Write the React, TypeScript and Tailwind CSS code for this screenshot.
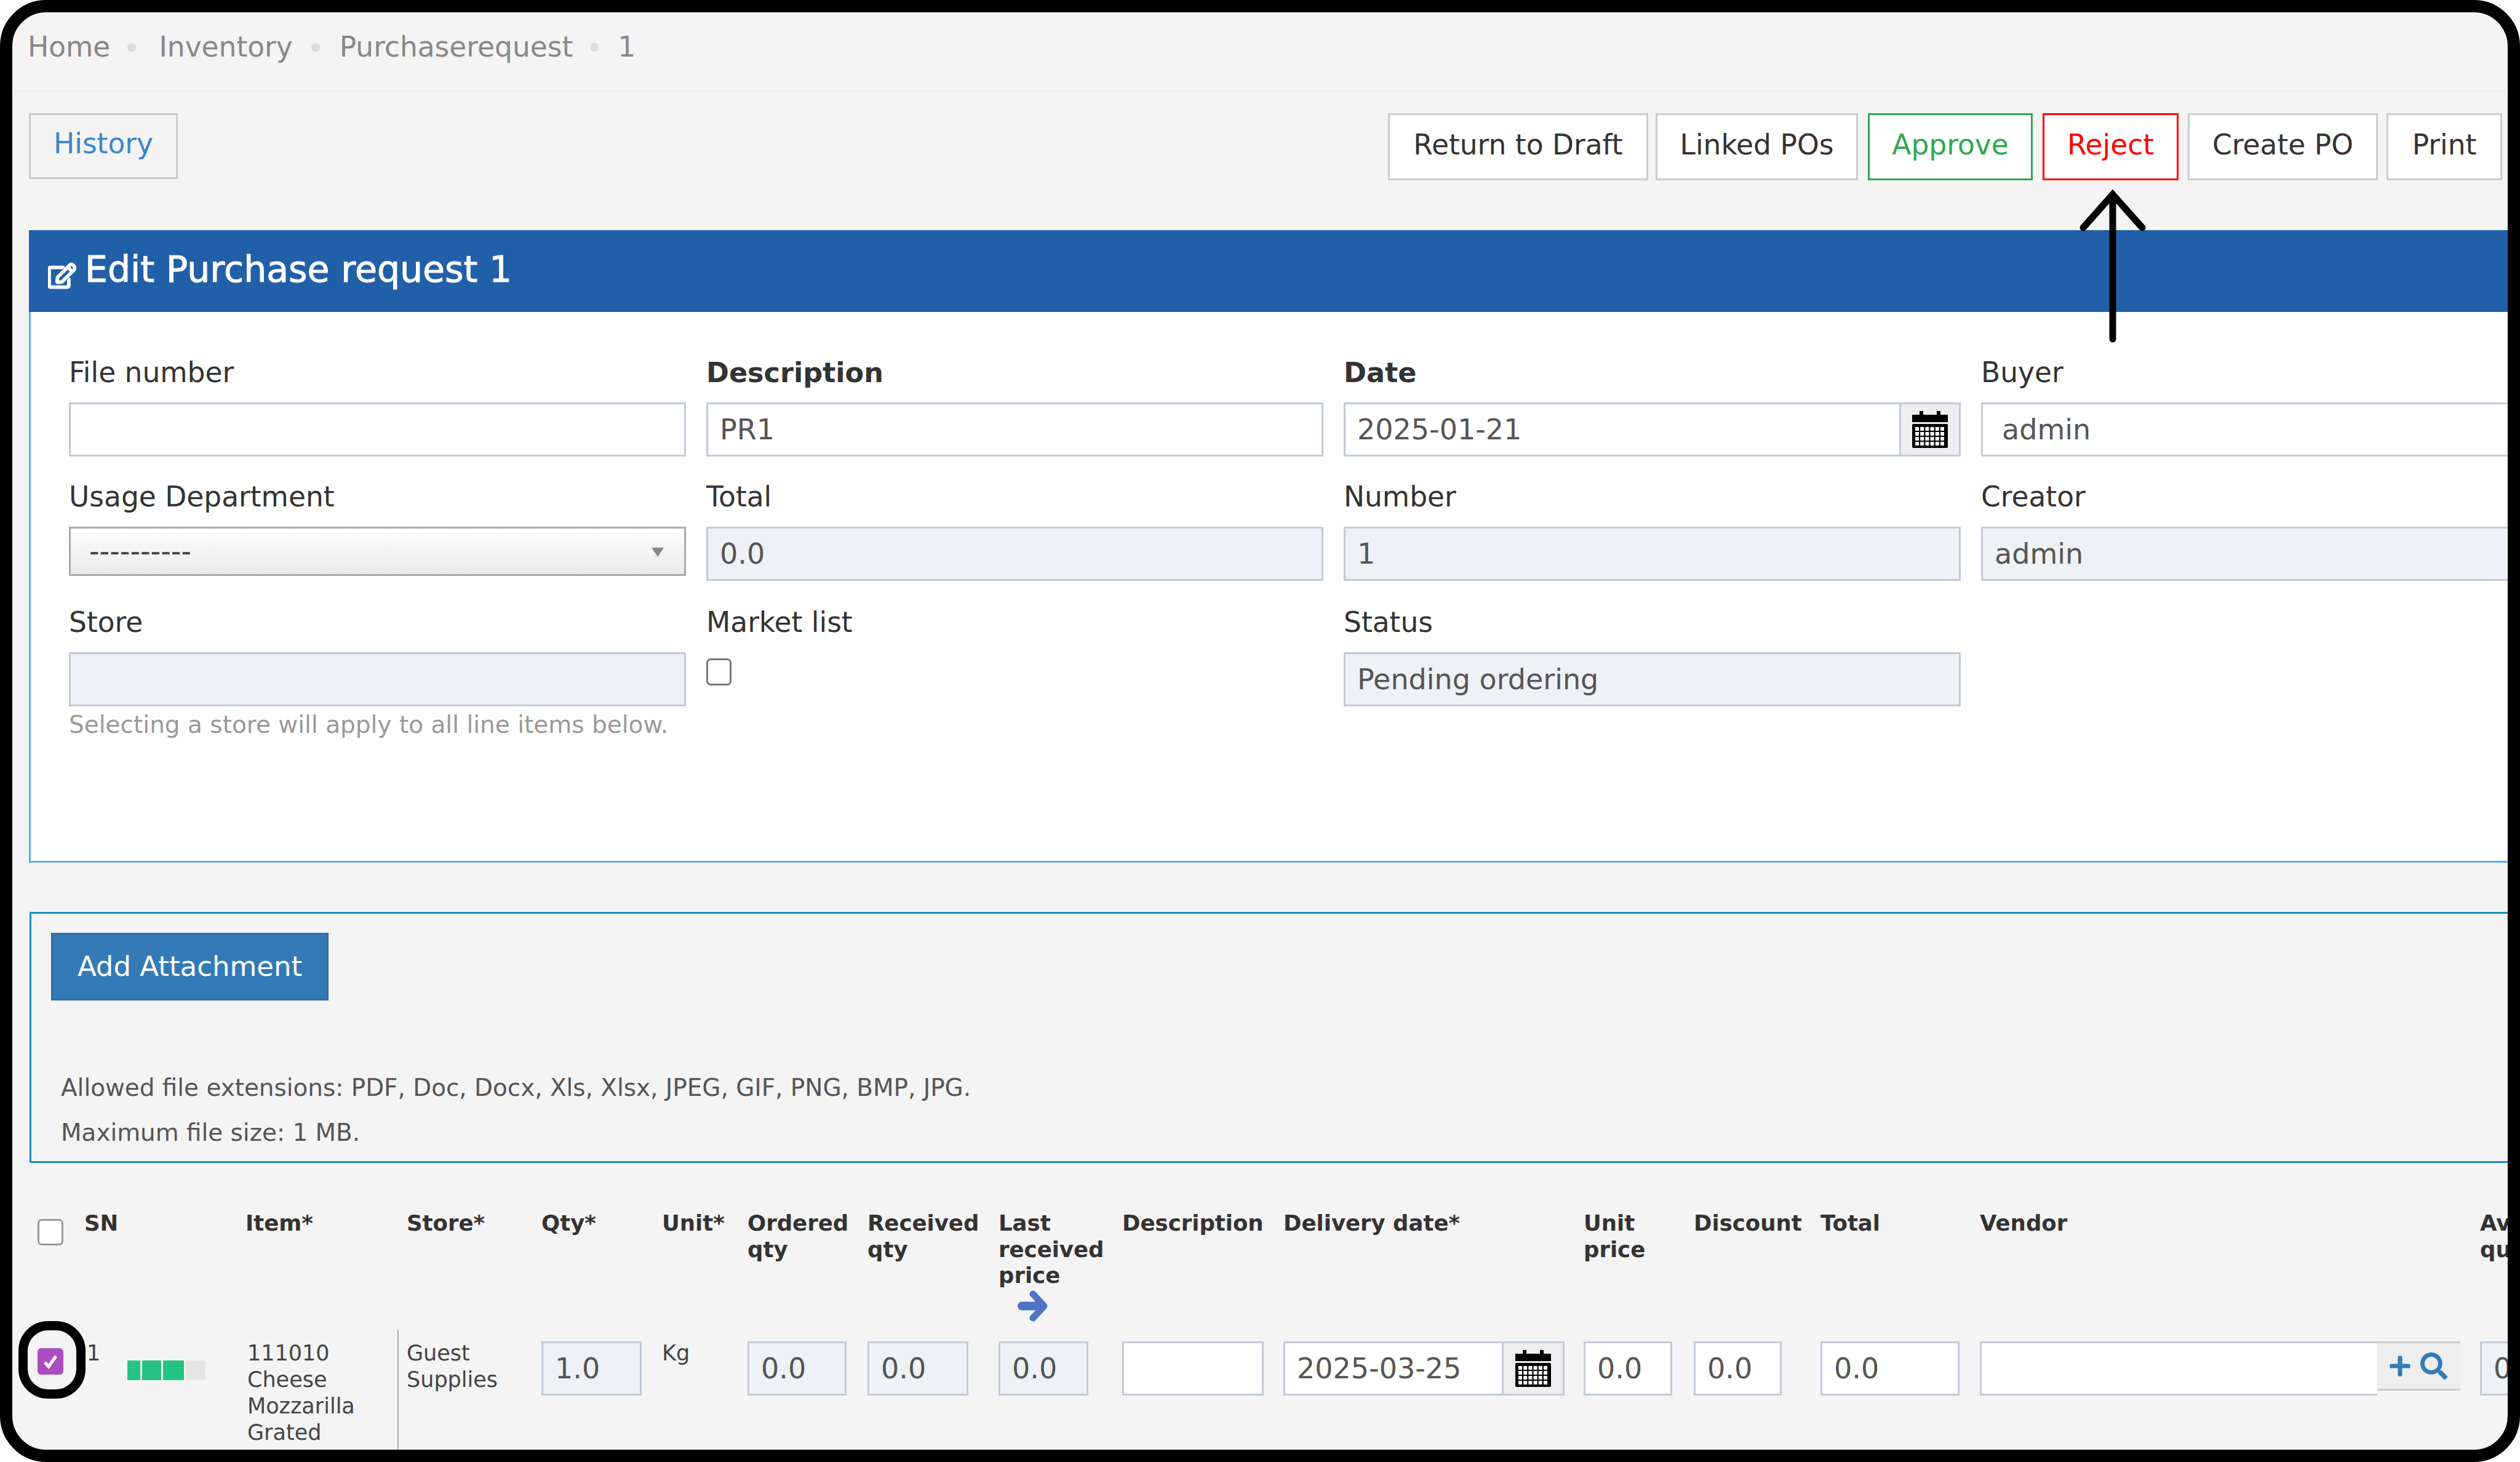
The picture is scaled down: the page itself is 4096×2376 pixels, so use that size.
import React from "react";
import { FaPlus, FaRegEdit, FaSearch } from "react-icons/fa";

function Cal() {
  const cells: React.ReactNode[] = [];
  for (let r = 0; r < 4; r++) {
    for (let c = 0; c < 6; c++) {
      cells.push(<rect key={`${r}-${c}`} x={5 + c * 8.2} y={26 + r * 8} width={6} height={6} fill="#fff" />);
    }
  }
  return (
    <svg width="58" height="60" viewBox="0 0 58 60">
      <rect x="12" y="0" width="6" height="10" fill="#000" />
      <rect x="40" y="0" width="6" height="10" fill="#000" />
      <rect x="0" y="6" width="58" height="12" fill="#000" />
      <rect x="0" y="21" width="58" height="39" rx="2" fill="#000" />
      {cells}
    </svg>
  );
}

function Field({ text = "", disabled = false, className = "" }: { text?: string; disabled?: boolean; className?: string }) {
  return (
    <div
      className={`flex h-[88px] items-center overflow-hidden border-[3px] border-[#c2cad8] px-[19px] text-[46px] text-[#555] whitespace-nowrap ${
        disabled ? "bg-[#eef1f5]" : "bg-white"
      } ${className}`}
    >
      {text}
    </div>
  );
}

function Labeled({ label, bold = false, children }: { label: string; bold?: boolean; children: React.ReactNode }) {
  return (
    <div>
      <div className={`mb-[25px] h-[50px] pt-[2px] leading-[50px] text-[#333] ${bold ? "text-[44.5px] font-bold" : "text-[45.5px]"}`}>{label}</div>
      {children}
    </div>
  );
}

function ToolButton({ label, className }: { label: string; className: string }) {
  return (
    <div className={`flex h-[109px] items-center justify-center border-[3px] bg-white pb-[5px] text-[45.5px] ${className}`}>{label}</div>
  );
}

function Th({ children, className = "" }: { children: React.ReactNode; className?: string }) {
  return <div className={`whitespace-nowrap text-[35.5px] font-bold leading-[42.5px] text-[#333] ${className}`}>{children}</div>;
}

export default function App() {
  return (
    <div className="relative h-[2376px] w-[4096px] overflow-hidden bg-white font-['DejaVu_Sans',sans-serif]">
      <div className="h-full w-full overflow-hidden rounded-[75px] border-[20px] border-black bg-[#f4f4f4]">
        {/* breadcrumb */}
        <div className="flex h-[130px] items-start border-b-[3px] border-[#eceff2] pl-[25px] pt-[27px] text-[45.5px] leading-[60px] text-[#888]">
          <span>Home</span>
          <span className="ml-[28px] mr-[37px] mt-[23px] h-[14px] w-[14px] rounded-full bg-[#ddd]" />
          <span>Inventory</span>
          <span className="ml-[30px] mr-[32px] mt-[23px] h-[14px] w-[14px] rounded-full bg-[#ddd]" />
          <span>Purchaserequest</span>
          <span className="ml-[28px] mr-[31px] mt-[23px] h-[14px] w-[14px] rounded-full bg-[#ddd]" />
          <span>1</span>
        </div>

        {/* toolbar */}
        <div className="flex items-start justify-between pl-[27px] pr-[9px] pt-[34px]">
          <div className="flex h-[107px] w-[242px] items-center justify-center border-[3px] border-[#ccc] pb-[6px] text-[45.5px] text-[#3a87c8]">
            History
          </div>
          <div className="flex">
            <ToolButton label="Return to Draft" className="w-[423px] border-[#ccc] text-[#333]" />
            <ToolButton label="Linked POs" className="ml-[12px] w-[329px] border-[#ccc] text-[#333]" />
            <ToolButton label="Approve" className="ml-[16px] w-[268px] border-[#2fa84f] text-[#2fa84f]" />
            <ToolButton label="Reject" className="ml-[16px] w-[221px] border-[#f00] text-[#f00]" />
            <ToolButton label="Create PO" className="ml-[15px] w-[309px] border-[#ccc] text-[#333]" />
            <ToolButton label="Print" className="ml-[14px] w-[188px] border-[#ccc] text-[#333]" />
          </div>
        </div>

        {/* edit card */}
        <div className="ml-[27px] mt-[81px]">
          <div className="flex h-[133px] items-center bg-[#2160a9] pb-[4px] pl-[31px] text-[58.5px] text-white [-webkit-text-stroke:1px_#fff]">
            <FaRegEdit className="mr-[14px] mt-[18px]" size={46} stroke="currentColor" strokeWidth={24} />
            <span>Edit Purchase request 1</span>
          </div>
          <div className="h-[895px] border-b-[3px] border-l-[3px] border-[#5dade2] bg-white pl-[62px] pt-[72px]">
            <div className="grid grid-cols-[1003px_1003px_1003px_1003px] grid-rows-[202px_204px_auto] gap-x-[33px]">
              <Labeled label="File number"><Field /></Labeled>
              <Labeled label="Description" bold><Field text="PR1" /></Labeled>
              <Labeled label="Date" bold>
                <div className="flex">
                  <Field text="2025-01-21" className="w-[903px] border-r-0" />
                  <div className="flex h-[88px] w-[100px] items-center justify-center border-[3px] border-[#c2cad8] bg-[#eee]">
                    <Cal />
                  </div>
                </div>
              </Labeled>
              <Labeled label="Buyer"><Field text="admin" className="h-[83px] px-[31px]" /></Labeled>

              <Labeled label="Usage Department">
                <div className="relative flex h-[80px] items-center border-[3px] border-[#aaa] bg-linear-to-b from-white to-[#eaeaea] pl-[30px] text-[46px] text-[#444]">
                  ----------
                  <span className="absolute right-[33px] top-[31px] h-0 w-0 border-x-[10px] border-t-[15px] border-x-transparent border-t-[#888]" />
                </div>
              </Labeled>
              <Labeled label="Total"><Field text="0.0" disabled /></Labeled>
              <Labeled label="Number"><Field text="1" disabled /></Labeled>
              <Labeled label="Creator"><Field text="admin" disabled /></Labeled>

              <div>
                <Labeled label="Store"><Field disabled /></Labeled>
                <div className="mt-[5px] whitespace-nowrap text-[39px] leading-[50px] text-[#999]">
                  Selecting a store will apply to all line items below.
                </div>
              </div>
              <div>
                <div className="mb-[35px] h-[50px] pt-[2px] text-[45.5px] leading-[50px] text-[#333]">Market list</div>
                <div className="h-[44px] w-[41px] rounded-[7px] border-[3px] border-[#777] bg-white" />
              </div>
              <Labeled label="Status"><Field text="Pending ordering" disabled /></Labeled>
              <div />
            </div>
          </div>
        </div>

        {/* attachments */}
        <div className="ml-[28px] mt-[80px] h-[408px] border-y-[3px] border-l-[3px] border-[#1a8fc1] pl-[32px] pt-[31px]">
          <div className="flex h-[110px] w-[451px] items-center justify-center border-[3px] border-[#2e6da4] bg-[#337ab7] text-[45px] text-white">
            Add Attachment
          </div>
          <div className="ml-[16px] mt-[105px] text-[38.9px] leading-[73px] text-[#555]">
            <div>Allowed file extensions: PDF, Doc, Docx, Xls, Xlsx, JPEG, GIF, PNG, BMP, JPG.</div>
            <div>Maximum file size: 1 MB.</div>
          </div>
        </div>

        {/* table */}
        <div className="ml-[41px] mt-[77px] w-[4100px]">
          <div className="grid h-[195px] grid-cols-[76px_262px_247px_234px_196px_139px_195px_213px_201px_262px_488px_179px_206px_259px_813px_200px]">
            <div className="pt-[14px]">
              <div className="h-[43px] w-[42px] rounded-[7px] border-[3px] border-[#999] bg-white" />
            </div>
            <Th>SN</Th>
            <Th>Item*</Th>
            <Th className="pl-[15px]">Store*</Th>
            <Th>Qty*</Th>
            <Th>Unit*</Th>
            <Th>Ordered<br />qty</Th>
            <Th>Received<br />qty</Th>
            <Th>
              Last<br />received<br />price
              <svg className="ml-[31px] mt-[2px]" width="50" height="51" viewBox="0 0 50 51">
                <path d="M7 25.5H40" fill="none" stroke="#5173c3" strokeWidth="14" strokeLinecap="round" />
                <path d="M25 6L43 25.5L25 45" fill="none" stroke="#5173c3" strokeWidth="11" strokeLinecap="round" strokeLinejoin="round" />
              </svg>
            </Th>
            <Th>Description</Th>
            <Th>Delivery date*</Th>
            <Th>Unit<br />price</Th>
            <Th>Discount</Th>
            <Th>Total</Th>
            <Th>Vendor</Th>
            <Th>Available<br />quantity</Th>
          </div>

          <div className="grid h-[198px] grid-cols-[76px_262px_247px_234px_196px_139px_195px_213px_201px_262px_488px_179px_206px_259px_813px_200px] text-[35px] leading-[43px] text-[#444]">
            <div className="pt-[29px]">
              <div className="flex h-[43px] w-[42px] items-center justify-center rounded-[6px] bg-[#ab4cc0]">
                <svg width="26" height="26" viewBox="0 0 26 26">
                  <polyline points="4,14 10,21 22,4" fill="none" stroke="#fff" strokeWidth="5" />
                </svg>
              </div>
            </div>
            <div className="flex pl-[4px] pt-[16px]">
              <span>1</span>
              <div className="ml-[44px] mt-[33px] flex h-[32px] w-[127px] gap-[3px]">
                <div className="w-[21px] bg-[#26c281]" />
                <div className="w-[31px] bg-[#26c281]" />
                <div className="w-[34px] bg-[#26c281]" />
                <div className="w-[32px] bg-[#e5e5e5]" />
              </div>
            </div>
            <div className="pl-[3px] pt-[16px]">111010<br />Cheese<br />Mozzarilla<br />Grated</div>
            <div className="border-l-2 border-[#aaa] pl-[13px] pt-[16px]">Guest<br />Supplies</div>
            <div className="pt-[18px]"><Field text="1.0" disabled className="w-[163px]" /></div>
            <div className="pt-[16px]">Kg</div>
            <div className="pt-[18px]"><Field text="0.0" disabled className="w-[161px]" /></div>
            <div className="pt-[18px]"><Field text="0.0" disabled className="w-[164px]" /></div>
            <div className="pt-[18px]"><Field text="0.0" disabled className="w-[146px]" /></div>
            <div className="pt-[18px]"><Field className="w-[230px]" /></div>
            <div className="pt-[18px]">
              <div className="flex w-[457px]">
                <Field text="2025-03-25" className="w-[355px] border-r-0" />
                <div className="flex h-[88px] w-[102px] items-center justify-center border-[3px] border-[#c2cad8] bg-[#eee]">
                  <Cal />
                </div>
              </div>
            </div>
            <div className="pt-[18px]"><Field text="0.0" className="w-[144px]" /></div>
            <div className="pt-[18px]"><Field text="0.0" className="w-[143px]" /></div>
            <div className="pt-[18px]"><Field text="0.0" className="w-[226px]" /></div>
            <div className="pt-[18px]">
              <div className="flex w-[781px]">
                <Field className="h-[80px] w-[646px] border-r-0" />
                <div className="flex h-[80px] w-[135px] items-center gap-[14px] border-[3px] border-x-0 border-t-[#ccc] border-b-[#ccc] bg-[#eee] pl-[18px] text-[#337ab7]">
                  <FaPlus size={38} />
                  <FaSearch size={44} />
                </div>
              </div>
            </div>
            <div className="pt-[18px]"><Field text="0.0" disabled className="w-[200px]" /></div>
          </div>
        </div>
      </div>

      {/* annotations */}
      <svg className="absolute left-[3380px] top-[308px]" width="108" height="250" viewBox="0 0 108 250">
        <path d="M54 243V8M6 62L54 8L102 62" fill="none" stroke="#000" strokeWidth="11" strokeLinecap="round" strokeLinejoin="miter" />
      </svg>
      <div className="absolute left-[30px] top-[2147px] h-[126px] w-[109px] rounded-[48px] border-[15px] border-black" />
    </div>
  );
}
